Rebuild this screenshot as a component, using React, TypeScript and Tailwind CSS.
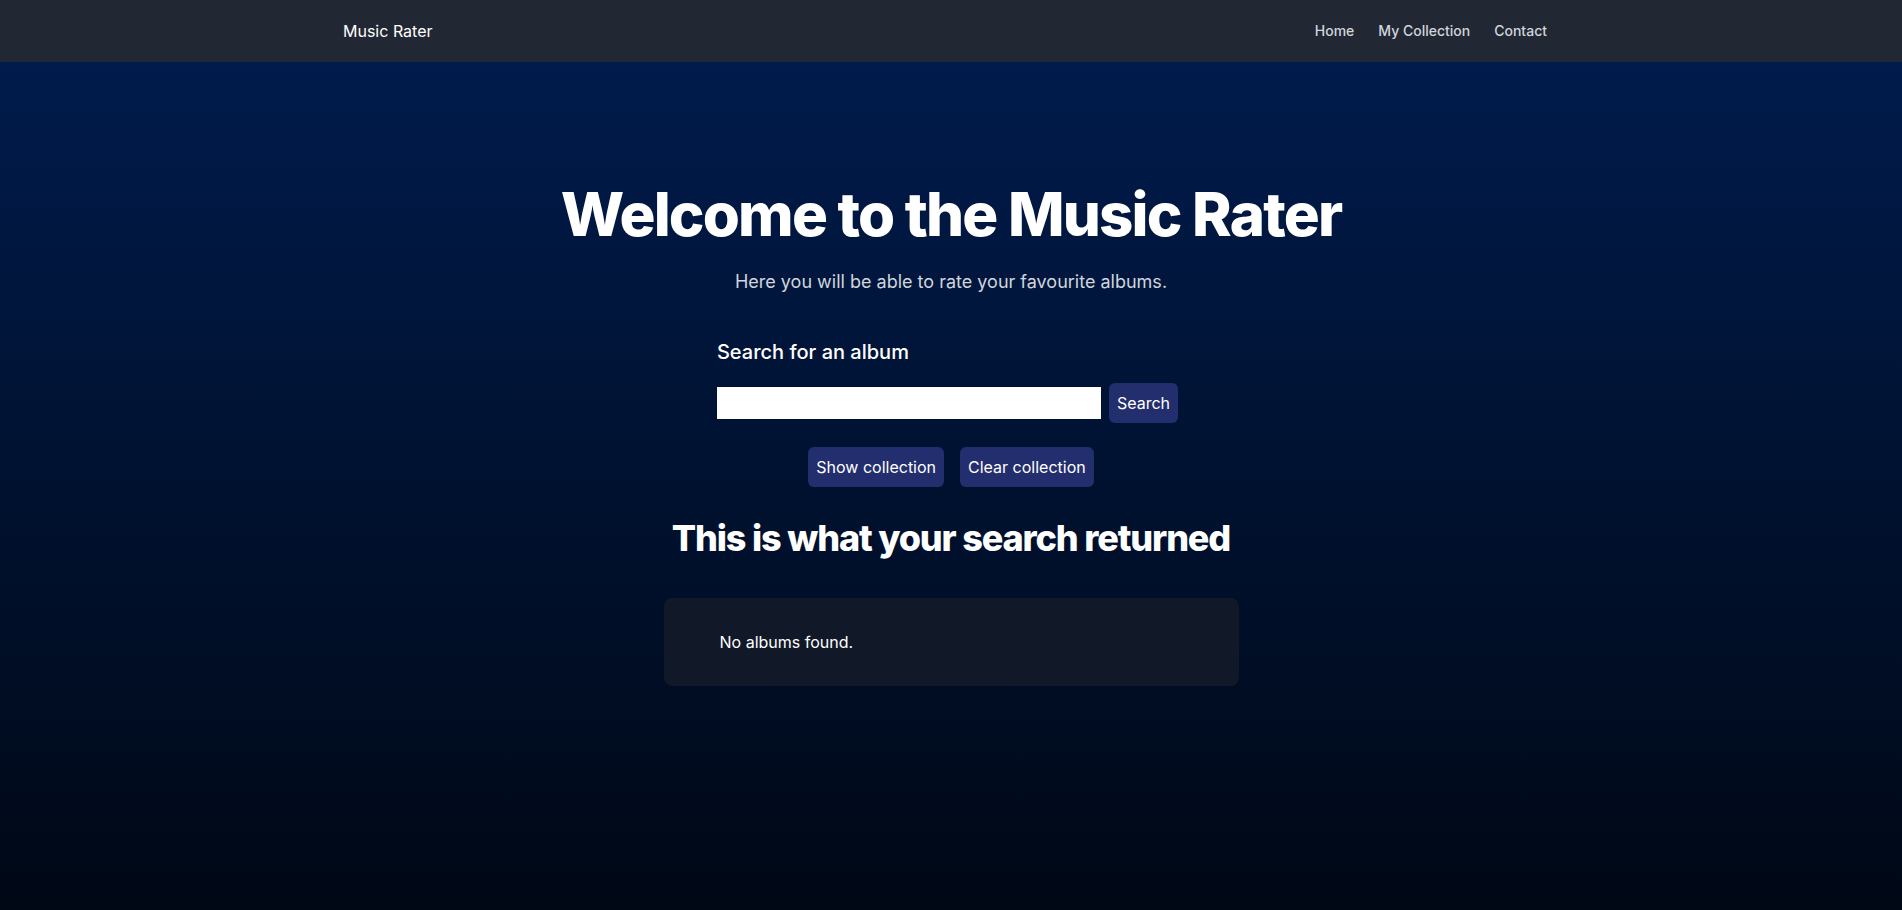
import React from "react";

export default function App() {
  return (
    <div className="h-screen overflow-hidden flex flex-col font-['Inter',sans-serif] text-white">
      <nav className="h-[62px] bg-[#212833] shrink-0">
        <div className="max-w-[1280px] mx-auto px-8 h-full flex items-center justify-between">
          <a className="text-base text-white">Music Rater</a>
          <div className="flex items-center">
            <a className="px-3 py-2 text-sm font-medium text-gray-300">Home</a>
            <a className="px-3 py-2 text-sm font-medium text-gray-300">My Collection</a>
            <a className="px-3 py-2 text-sm font-medium text-gray-300">Contact</a>
          </div>
        </div>
      </nav>
      <main className="flex-1 bg-gradient-to-b from-[#001b4c] to-[#000816] flex flex-col items-center pt-[122px]">
        <h1 className="text-6xl font-extrabold tracking-[-0.03em] text-white">Welcome to the Music Rater</h1>
        <p className="mt-6 text-lg text-gray-300">Here you will be able to rate your favourite albums.</p>
        <div className="mt-[42px] pr-[7px]">
          <h3 className="text-xl font-medium text-white">Search for an album</h3>
          <div className="mt-[17px] flex items-center">
            <input type="text" className="w-96 h-8 bg-white text-black outline-none px-2" />
            <button className="ml-2 px-2 py-2 text-base rounded-md bg-[#232e6e] text-white">Search</button>
          </div>
        </div>
        <div className="mt-6 flex gap-4">
          <button className="px-2 py-2 text-base rounded-md bg-[#232e6e] text-white">Show collection</button>
          <button className="px-2 py-2 text-base rounded-md bg-[#232e6e] text-white">Clear collection</button>
        </div>
        <h2 className="mt-[31px] text-4xl font-extrabold tracking-[-0.032em] text-white">This is what your search returned</h2>
        <div className="mt-[40px] w-[575px] rounded-lg bg-[#111827] py-8 pl-14 pr-6">
          <p className="text-base text-white">No albums found.</p>
        </div>
      </main>
    </div>
  );
}
